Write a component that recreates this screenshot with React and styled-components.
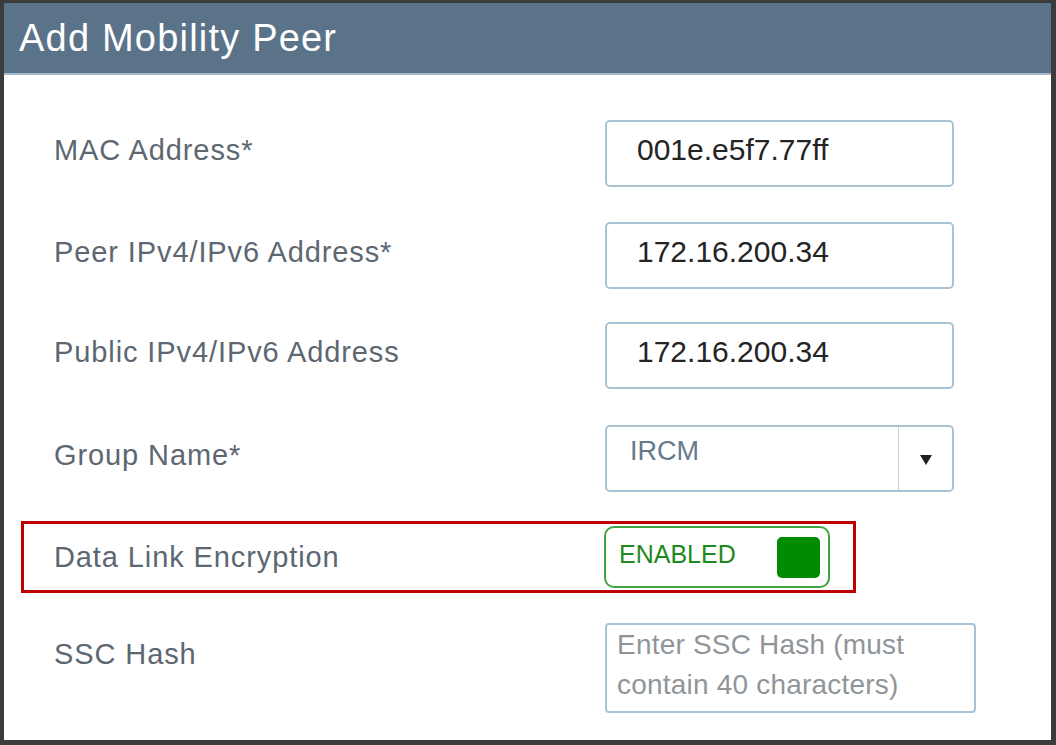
import React from 'react';
import styled, { createGlobalStyle } from 'styled-components';

const GlobalStyle = createGlobalStyle`
  body {
    margin: 0;
    font-family: "Liberation Sans", Arial, sans-serif;
  }
`;

const Frame = styled.div`
  width: 1056px;
  height: 745px;
  box-sizing: border-box;
  border-style: solid;
  border-color: #3b3b3b;
  border-width: 3px 5px 5px 4px;
  background: #fff;
  display: flex;
  flex-direction: column;
`;

const Header = styled.div`
  height: 70px;
  line-height: 70px;
  background: #5b7389;
  border-bottom: 2px solid #a5b9c8;
  color: #fff;
  font-size: 38px;
  letter-spacing: 1.2px;
  padding-left: 15px;
`;

const Form = styled.div`
  padding-top: 45px;
  display: flex;
  flex-direction: column;
`;

const Row = styled.div`
  display: grid;
  grid-template-columns: ${({ $highlight }) => ($highlight ? '550px' : '551px')} auto;
  align-items: ${({ $top }) => ($top ? 'start' : 'center')};
  margin-top: ${({ $mt }) => $mt || 0}px;
  padding-left: ${({ $highlight }) => ($highlight ? 30 : 50)}px;
  ${({ $highlight }) =>
    $highlight &&
    `
    box-sizing: border-box;
    width: 835px;
    height: 72px;
    margin-left: 17px;
    border: 3px solid #c00000;
  `}
`;

const Label = styled.div`
  font-size: 29px;
  line-height: 34px;
  color: #5d6771;
  letter-spacing: 0.9px;
  padding-top: ${({ $pt }) => $pt || 0}px;
  padding-bottom: ${({ $pb }) => $pb || 0}px;
`;

const Input = styled.div`
  box-sizing: border-box;
  width: 349px;
  height: 67px;
  border: 2px solid #aac3d2;
  border-radius: 5px;
  padding: 0 0 8px 30px;
  display: flex;
  align-items: center;
  font-size: 30px;
  color: #242424;
`;

const Select = styled.div`
  box-sizing: border-box;
  width: 349px;
  height: 67px;
  border: 2px solid #aac3d2;
  border-radius: 5px;
  display: flex;
`;

const SelectValue = styled.div`
  flex: 1;
  display: flex;
  align-items: center;
  padding: 0 0 14px 23px;
  font-size: 27px;
  color: #66798d;
`;

const SelectArrow = styled.div`
  width: 53px;
  border-left: 1px solid #d0d0d0;
  display: flex;
  align-items: center;
  justify-content: center;
  padding-top: 2px;
`;

const Toggle = styled.div`
  box-sizing: border-box;
  width: 226px;
  height: 62px;
  border: 2px solid #42a542;
  border-radius: 10px;
  display: flex;
  align-items: center;
  justify-content: space-between;
  padding: 0 8px 0 13px;
`;

const ToggleText = styled.span`
  font-size: 25px;
  color: #1d8a1d;
  padding-bottom: 6px;
`;

const Knob = styled.span`
  width: 43px;
  height: 41px;
  border-radius: 5px;
  background: #008b00;
`;

const TextArea = styled.div`
  box-sizing: border-box;
  width: 371px;
  height: 90px;
  border: 2px solid #aac3d2;
  border-radius: 4px;
  padding: 0 10px;
  font-size: 28px;
  line-height: 40px;
  letter-spacing: 0.2px;
  color: #909599;
`;

const fields = [
  { label: 'MAC Address*', value: '001e.e5f7.77ff', mt: 0 },
  { label: 'Peer IPv4/IPv6 Address*', value: '172.16.200.34', mt: 35 },
  { label: 'Public IPv4/IPv6 Address', value: '172.16.200.34', mt: 33 },
];

export default function App() {
  return (
    <>
      <GlobalStyle />
      <Frame>
        <Header>Add Mobility Peer</Header>
        <Form>
          {fields.map((f) => (
            <Row key={f.label} $mt={f.mt}>
              <Label $pb={7}>{f.label}</Label>
              <Input>{f.value}</Input>
            </Row>
          ))}
          <Row $mt={36}>
            <Label $pb={7}>Group Name*</Label>
            <Select>
              <SelectValue>IRCM</SelectValue>
              <SelectArrow>
                <svg width="12" height="10" viewBox="0 0 12 10">
                  <path d="M0 0 H12 L6 10 Z" fill="#222" />
                </svg>
              </SelectArrow>
            </Select>
          </Row>
          <Row $highlight $mt={29}>
            <Label>Data Link Encryption</Label>
            <Toggle>
              <ToggleText>ENABLED</ToggleText>
              <Knob />
            </Toggle>
          </Row>
          <Row $top $mt={30}>
            <Label $pt={14}>SSC Hash</Label>
            <TextArea>Enter SSC Hash (must contain 40 characters)</TextArea>
          </Row>
        </Form>
      </Frame>
    </>
  );
}
